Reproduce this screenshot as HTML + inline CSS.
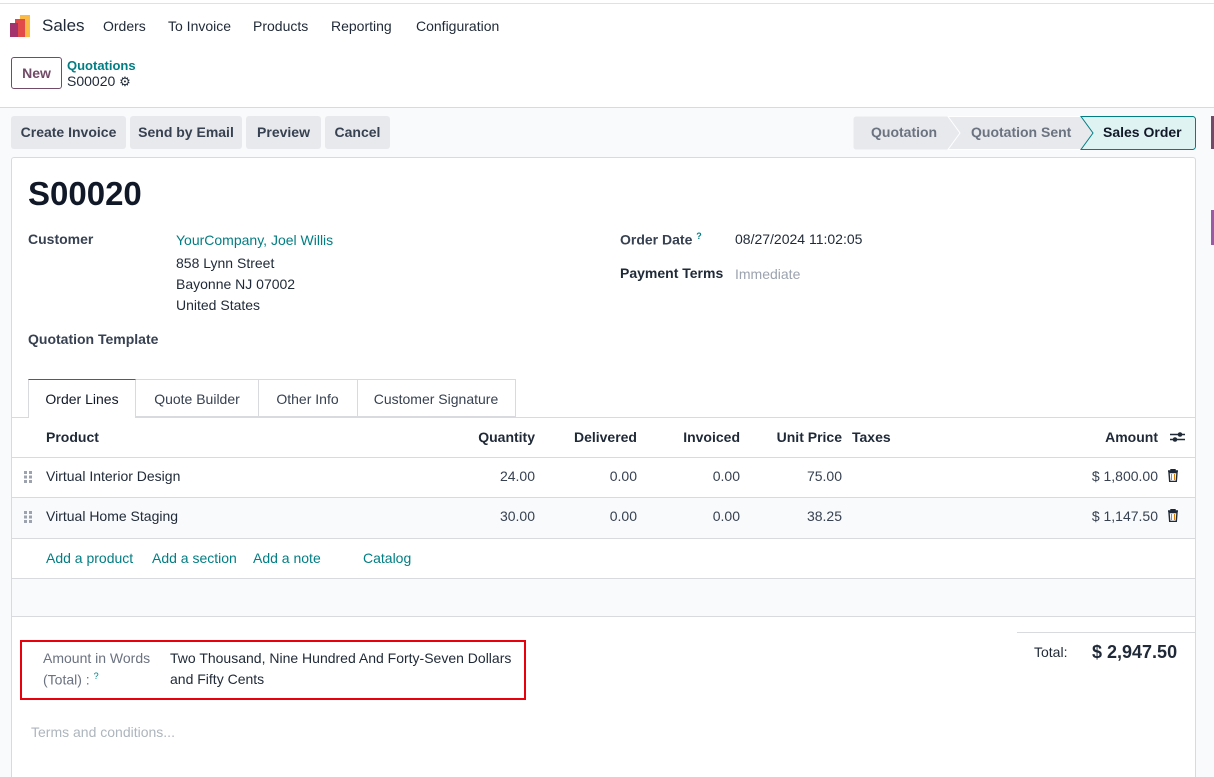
<!DOCTYPE html>
<html><head><meta charset="utf-8"><style>
*{box-sizing:border-box;margin:0;padding:0}
html,body{width:1214px;height:777px;overflow:hidden}
body{background:#fff;font-family:"Liberation Sans",sans-serif;font-size:14px;color:#374151;position:relative}
.a{position:absolute;white-space:nowrap}
.b{font-weight:bold;color:#1f2937}
.teal{color:#017e84}
.btn{position:absolute;top:116px;height:33px;background:#e7e9ed;border-radius:3px;font-weight:bold;color:#374151;line-height:33px;text-align:center;font-size:14px}
.r{text-align:right}
</style></head><body>
<div class="a" style="left:0;top:3px;width:1214px;height:1px;background:#dee2e6"></div>
<svg class="a" style="left:10px;top:15px" width="22" height="22" viewBox="0 0 22 22"><rect x="10" y="0" width="10" height="22" fill="#fbb945"/><rect x="5" y="4" width="10" height="18" fill="#e14a48"/><rect x="0" y="8" width="8" height="14" fill="#a3336c"/></svg>
<div class="a" style="left:42px;top:16px;font-size:17px;color:#1f2937">Sales</div>
<div class="a" style="left:103px;top:18px;color:#1f2937">Orders</div>
<div class="a" style="left:168px;top:18px;color:#1f2937">To Invoice</div>
<div class="a" style="left:253px;top:18px;color:#1f2937">Products</div>
<div class="a" style="left:331px;top:18px;color:#1f2937">Reporting</div>
<div class="a" style="left:416px;top:18px;color:#1f2937">Configuration</div>
<div class="a" style="left:11px;top:57px;width:51px;height:32px;border:1px solid #714b67;border-radius:3px;color:#714b67;font-weight:bold;text-align:center;line-height:30px">New</div>
<div class="a teal" style="left:67px;top:58px;font-weight:bold;font-size:13px">Quotations</div>
<div class="a" style="left:67px;top:73px;color:#1f2937">S00020 <span style="font-size:13px">⚙</span></div>
<div class="a" style="left:0;top:107px;width:1214px;height:1px;background:#d8dadd"></div>
<div class="a" style="left:0;top:108px;width:1214px;height:669px;background:#f9fafb"></div>
<div class="btn" style="left:11px;width:115px">Create Invoice</div>
<div class="btn" style="left:130px;width:112px">Send by Email</div>
<div class="btn" style="left:246px;width:75px">Preview</div>
<div class="btn" style="left:325px;width:65px">Cancel</div>
<svg class="a" style="left:853px;top:116px" width="344" height="34"><path d="M3 .5H95L107 17 95 33.5H3A3 3 0 0 1 .5 30.5V3.5A3 3 0 0 1 3 .5Z" fill="#e7e9ed"/><path d="M95 .5H228L240 17 228 33.5H95L107 17Z" fill="#e7e9ed" stroke="#fff"/><path d="M228 .5H340A3 3 0 0 1 342.5 3.5V30.5A3 3 0 0 1 340 33.5H228L240 17Z" fill="#e0f3f3" stroke="#017e84"/><text x="18" y="21" font-family="Liberation Sans" font-size="14" font-weight="bold" fill="#6b7280">Quotation</text><text x="118" y="21" font-family="Liberation Sans" font-size="14" font-weight="bold" fill="#6b7280">Quotation Sent</text><text x="250" y="21" font-family="Liberation Sans" font-size="14" font-weight="bold" fill="#111827">Sales Order</text></svg>
<div class="a" style="left:1211px;top:116px;width:3px;height:33px;background:#714b67"></div>
<div class="a" style="left:1211px;top:210px;width:3px;height:35px;background:#9b59a6"></div>
<div class="a" style="left:11px;top:157px;width:1185px;height:620px;background:#fff;border:1px solid #d8dadd;border-bottom:none;border-radius:3px 3px 0 0"></div>
<div class="a" style="left:28px;top:175px;font-size:33px;font-weight:bold;color:#111827">S00020</div>
<div class="a b" style="left:28px;top:231px;color:#374151">Customer</div>
<div class="a teal" style="left:176px;top:232px">YourCompany, Joel Willis</div>
<div class="a" style="left:176px;top:255px;color:#1f2937">858 Lynn Street</div>
<div class="a" style="left:176px;top:276px;color:#1f2937">Bayonne NJ 07002</div>
<div class="a" style="left:176px;top:297px;color:#1f2937">United States</div>
<div class="a b" style="left:28px;top:331px;color:#374151">Quotation Template</div>
<div class="a b" style="left:620px;top:231px;color:#374151">Order Date <sup class="teal" style="font-size:9px">?</sup></div>
<div class="a" style="left:735px;top:231px;color:#1f2937">08/27/2024 11:02:05</div>
<div class="a b" style="left:620px;top:265px">Payment Terms</div>
<div class="a" style="left:735px;top:266px;color:#9ca3af">Immediate</div>
<div class="a" style="left:12px;top:417px;width:1183px;height:1px;background:#d8dadd"></div>
<div class="a" style="left:28px;top:379px;width:108px;height:39px;background:#fff;border:1px solid #d8dadd;border-top:1px solid #714b67;border-bottom:none;text-align:center;line-height:38px;color:#111827">Order Lines</div>
<div class="a" style="left:136px;top:379px;width:123px;height:38px;border:1px solid #d8dadd;border-left:none;text-align:center;line-height:38px">Quote Builder</div>
<div class="a" style="left:258px;top:379px;width:100px;height:38px;border:1px solid #d8dadd;border-left:none;text-align:center;line-height:38px">Other Info</div>
<div class="a" style="left:357px;top:379px;width:159px;height:38px;border:1px solid #d8dadd;border-left:none;text-align:center;line-height:38px">Customer Signature</div>
<div class="a b" style="left:46px;top:429px">Product</div>
<div class="a b r" style="left:435px;top:429px;width:100px">Quantity</div>
<div class="a b r" style="left:537px;top:429px;width:100px">Delivered</div>
<div class="a b r" style="left:640px;top:429px;width:100px">Invoiced</div>
<div class="a b r" style="left:742px;top:429px;width:100px">Unit Price</div>
<div class="a b" style="left:852px;top:429px">Taxes</div>
<div class="a b r" style="left:1058px;top:429px;width:100px">Amount</div>
<svg class="a" style="left:1170px;top:430px" width="15" height="14"><path d="M0 4.5H15M0 9.5H15" stroke="#1f2937" stroke-width="1.6"/><circle cx="10" cy="4.5" r="2.3" fill="#1f2937"/><circle cx="5" cy="9.5" r="2.3" fill="#1f2937"/></svg>
<div class="a" style="left:12px;top:457px;width:1183px;height:1px;background:#d8dadd"></div>
<div class="a" style="left:12px;top:498px;width:1183px;height:40px;background:#f9fafb"></div>
<div class="a" style="left:12px;top:497px;width:1183px;height:1px;background:#d8dadd"></div>
<div class="a" style="left:12px;top:538px;width:1183px;height:1px;background:#d8dadd"></div>
<svg class="a" style="left:24px;top:471px" width="9" height="12"><g fill="#9ca3af"><rect x="0" y="0" width="3" height="3"/><rect x="5" y="0" width="3" height="3"/><rect x="0" y="4.5" width="3" height="3"/><rect x="5" y="4.5" width="3" height="3"/><rect x="0" y="9" width="3" height="3"/><rect x="5" y="9" width="3" height="3"/></g></svg>
<svg class="a" style="left:24px;top:511px" width="9" height="12"><g fill="#9ca3af"><rect x="0" y="0" width="3" height="3"/><rect x="5" y="0" width="3" height="3"/><rect x="0" y="4.5" width="3" height="3"/><rect x="5" y="4.5" width="3" height="3"/><rect x="0" y="9" width="3" height="3"/><rect x="5" y="9" width="3" height="3"/></g></svg>
<div class="a" style="left:46px;top:468px;color:#1f2937">Virtual Interior Design</div>
<div class="a r" style="left:435px;top:468px;width:100px">24.00</div>
<div class="a r" style="left:537px;top:468px;width:100px">0.00</div>
<div class="a r" style="left:640px;top:468px;width:100px">0.00</div>
<div class="a r" style="left:742px;top:468px;width:100px">75.00</div>
<div class="a r" style="left:1058px;top:468px;width:100px">$ 1,800.00</div>
<div class="a" style="left:46px;top:508px;color:#1f2937">Virtual Home Staging</div>
<div class="a r" style="left:435px;top:508px;width:100px">30.00</div>
<div class="a r" style="left:537px;top:508px;width:100px">0.00</div>
<div class="a r" style="left:640px;top:508px;width:100px">0.00</div>
<div class="a r" style="left:742px;top:508px;width:100px">38.25</div>
<div class="a r" style="left:1058px;top:508px;width:100px">$ 1,147.50</div>
<svg class="a" style="left:1167px;top:469px" width="12" height="13"><path d="M1 2h10M4 2V0.5h4V2M2 3.5h8l-.7 9h-6.6z" fill="none" stroke="#1f2937" stroke-width="1.4"/><path d="M4.5 5v6M7.5 5v6" stroke="#e07b00" stroke-width="1"/></svg>
<svg class="a" style="left:1167px;top:509px" width="12" height="13"><path d="M1 2h10M4 2V0.5h4V2M2 3.5h8l-.7 9h-6.6z" fill="none" stroke="#1f2937" stroke-width="1.4"/><path d="M4.5 5v6M7.5 5v6" stroke="#e07b00" stroke-width="1"/></svg>
<div class="a teal" style="left:46px;top:550px">Add a product</div>
<div class="a teal" style="left:152px;top:550px">Add a section</div>
<div class="a teal" style="left:253px;top:550px">Add a note</div>
<div class="a teal" style="left:363px;top:550px">Catalog</div>
<div class="a" style="left:12px;top:578px;width:1183px;height:39px;background:#f9fafb;border-top:1px solid #d8dadd;border-bottom:1px solid #d8dadd"></div>
<div class="a" style="left:1017px;top:632px;width:178px;height:1px;background:#d8dadd"></div>
<div class="a" style="left:1034px;top:644px;color:#1f2937">Total:</div>
<div class="a" style="left:1092px;top:642px;font-size:18px;font-weight:bold;color:#1f2937">$ 2,947.50</div>
<div class="a" style="left:20px;top:640px;width:506px;height:60px;border:2px solid #e8000b"></div>
<div class="a" style="left:43px;top:650px;color:#6b7280">Amount in Words</div>
<div class="a" style="left:43px;top:671px;color:#6b7280">(Total) : <sup class="teal" style="font-size:9px">?</sup></div>
<div class="a" style="left:170px;top:650px;color:#1f2937">Two Thousand, Nine Hundred And Forty-Seven Dollars</div>
<div class="a" style="left:170px;top:671px;color:#1f2937">and Fifty Cents</div>
<div class="a" style="left:31px;top:724px;color:#adb5bd">Terms and conditions...</div>
</body></html>
